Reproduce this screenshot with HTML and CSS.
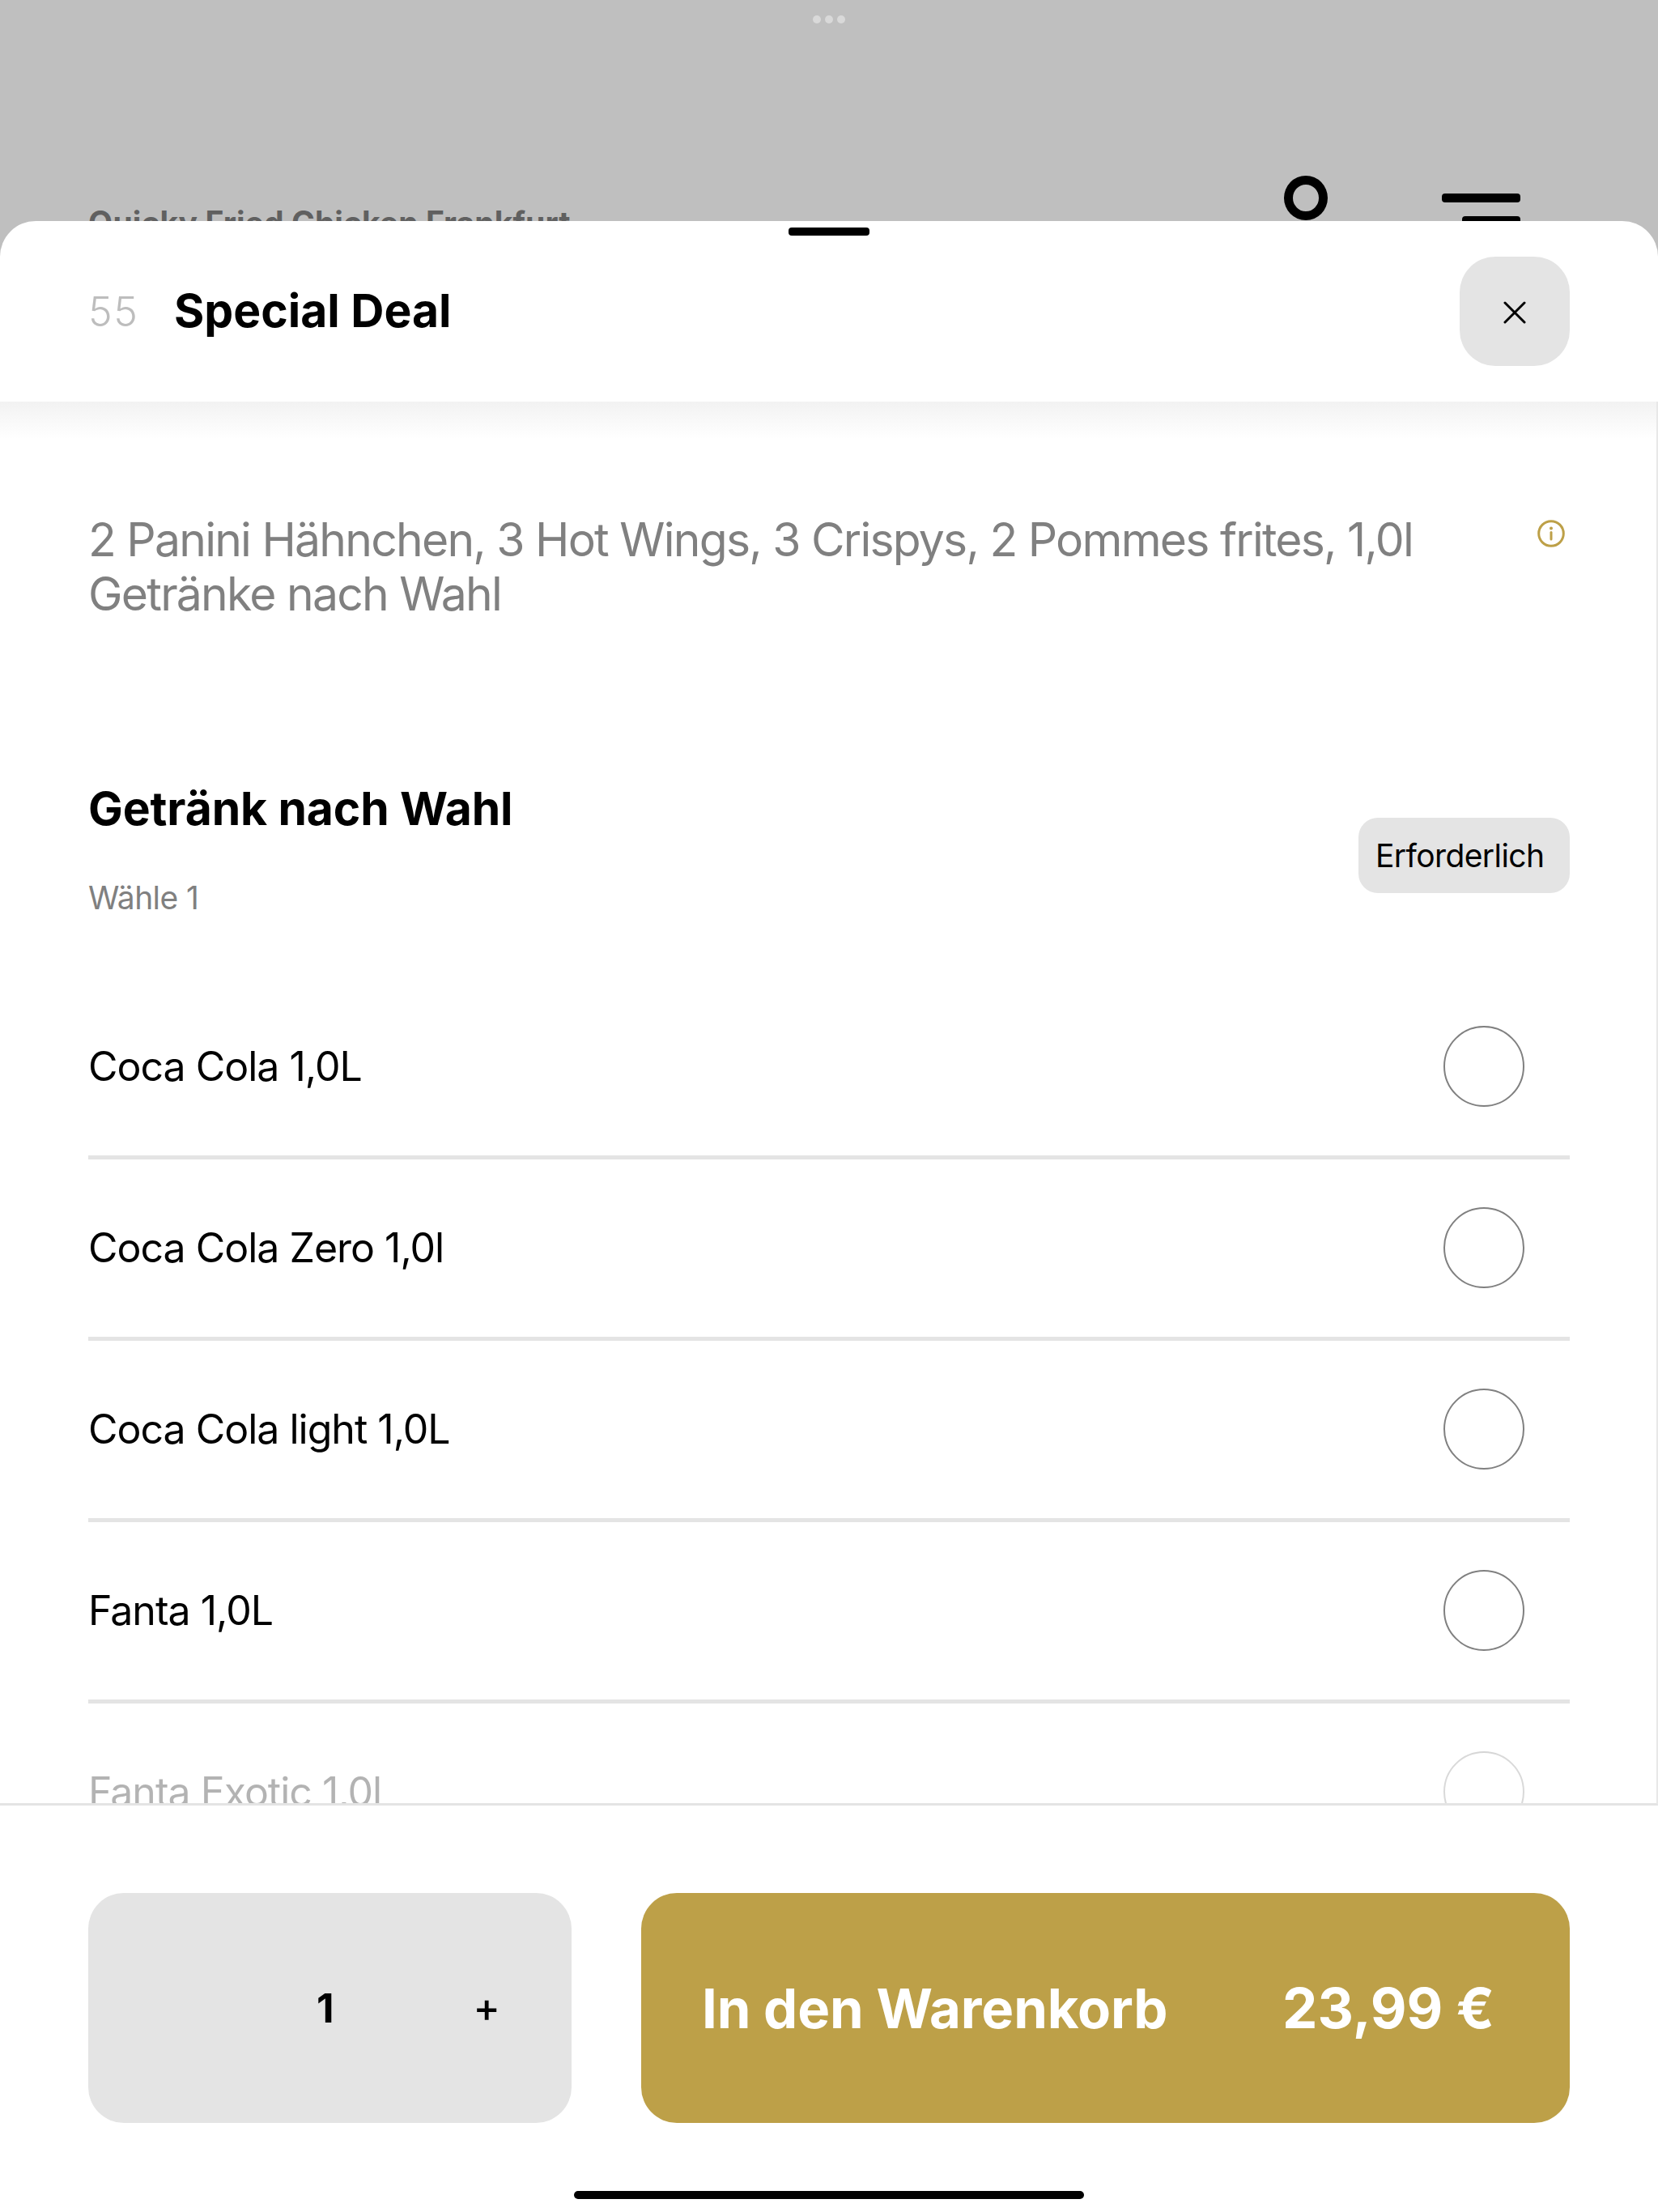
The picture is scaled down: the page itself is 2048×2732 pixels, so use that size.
FILE: index.html
```html
<!DOCTYPE html>
<html lang="de">
<head>
    <meta charset="UTF-8">
    <meta name="viewport" content="width=device-width, initial-scale=1.0">
    <title>Special Deal</title>
    <link rel="stylesheet" href="styles.css">
</head>
<body>

    <div class="backdrop">
        <div class="dots"><span></span><span></span><span></span></div>
        <div class="shop-bar">
            <span class="shop-name">Quicky Fried Chicken Frankfurt</span>
            <span class="search-ring"></span>
            <span class="menu-lines"><i></i><i class="short"></i></span>
        </div>
    </div>

    <div class="sheet">
        <div class="sheet-handle"></div>

        <header class="sheet-header">
            <span class="item-number">55</span>
            <h1 class="item-title">Special Deal</h1>
            <button class="close-btn" type="button" aria-label="Schließen">
                <svg width="28" height="28" viewBox="0 0 28 28"><path d="M2 2 L26 26 M26 2 L2 26" stroke="#000" stroke-width="3" stroke-linecap="round"/></svg>
            </button>
        </header>

        <main class="sheet-body">
            <div class="description">
                <p>2 Panini Hähnchen, 3 Hot Wings, 3 Crispys, 2 Pommes frites, 1,0l Getränke nach Wahl</p>
                <svg class="info-icon" width="34" height="34" viewBox="0 0 34 34">
                    <circle cx="17" cy="17" r="15.3" fill="none" stroke="#bda048" stroke-width="3"/>
                    <circle cx="17" cy="10.5" r="2" fill="#bda048"/>
                    <path d="M17 15.5 V24" stroke="#bda048" stroke-width="3" stroke-linecap="round"/>
                </svg>
            </div>

            <section class="group-head">
                <div>
                    <h2 class="group-title">Getränk nach Wahl</h2>
                    <p class="group-hint">Wähle 1</p>
                </div>
                <span class="chip">Erforderlich</span>
            </section>

            <ul class="options">
                <li class="option"><span>Coca Cola 1,0L</span><span class="radio"></span></li>
                <li class="option"><span>Coca Cola Zero 1,0l</span><span class="radio"></span></li>
                <li class="option"><span>Coca Cola light 1,0L</span><span class="radio"></span></li>
                <li class="option"><span>Fanta 1,0L</span><span class="radio"></span></li>
                <li class="option"><span>Fanta Exotic 1,0l</span><span class="radio"></span></li>
            </ul>
            <div class="body-fade"></div>
        </main>

        <footer class="sheet-footer">
            <div class="actions">
                <div class="stepper">
                    <span class="qty">1</span>
                    <span class="plus">+</span>
                </div>
                <button class="add-btn" type="button">
                    <span class="add-label">In den Warenkorb</span>
                    <span>23,99 €</span>
                </button>
            </div>
            <div class="home-bar"></div>
        </footer>
    </div>

</body>
</html>
```

FILE: styles.css
```css
* {
    box-sizing: border-box;
}
html, body {
    margin: 0;
    height: 2732px;
    overflow: hidden;
}
body {
    font-family: Inter, "Liberation Sans", sans-serif;
    background-color: #bfbfbf;
    color: #000;
    display: flex;
    flex-direction: column;
}
h1, h2, p, ul {
    margin: 0;
    padding: 0;
}

/* page behind the sheet */
.backdrop {
    height: 273px;
    flex: none;
    overflow: hidden;
    padding: 0 109px;
    display: flex;
    flex-direction: column;
    align-items: stretch;
}
.dots {
    display: flex;
    justify-content: center;
    gap: 5px;
    padding-top: 19px;
    height: 217px;
    flex: none;
}
.dots span {
    width: 10px;
    height: 10px;
    border-radius: 50%;
    background-color: #d9d9d9;
}
.shop-bar {
    display: flex;
    align-items: flex-start;
}
.shop-name {
    flex: 1;
    font-size: 39px;
    font-weight: 700;
    letter-spacing: 0.1px;
    color: #606060;
    line-height: 47px;
    padding-top: 34px;
}
.search-ring {
    width: 54px;
    height: 55px;
    border: 11px solid #000;
    border-radius: 50%;
    margin-right: 141px;
    flex: none;
}
.menu-lines {
    width: 97px;
    margin-right: 61px;
    padding-top: 22px;
    display: flex;
    flex-direction: column;
    align-items: flex-end;
    gap: 17px;
    flex: none;
}
.menu-lines i {
    display: block;
    width: 97px;
    height: 11px;
    border-radius: 4px;
    background-color: #000;
}
.menu-lines .short {
    width: 72px;
}

/* sheet */
.sheet {
    position: relative;
    flex: 1;
    min-height: 0;
    background-color: #fff;
    border-radius: 44px 44px 0 0;
    display: flex;
    flex-direction: column;
}
.sheet-handle {
    position: absolute;
    top: 8px;
    left: 974px;
    width: 100px;
    height: 10px;
    border-radius: 4px;
    background-color: #000;
}
.sheet-header {
    height: 223px;
    flex: none;
    padding: 0 109px;
    display: flex;
    align-items: center;
}
.item-number {
    font-size: 50px;
    font-weight: 300;
    letter-spacing: 1.5px;
    color: #bdbdbd;
    width: 106px;
    flex: none;
}
.item-title {
    flex: 1;
    font-size: 57px;
    font-weight: 700;
    margin-top: -2px;
}
.close-btn {
    width: 136px;
    height: 135px;
    border: none;
    border-radius: 44px;
    background-color: #e4e4e4;
    display: flex;
    align-items: center;
    justify-content: center;
    padding: 3px 0 0;
}

.sheet-body {
    position: relative;
    flex: 1;
    min-height: 0;
    overflow: hidden;
    padding: 0 107px 0 109px;
    border-right: 2px solid #e8e8e8;
    border-bottom: 3px solid #e4e4e4;
}
.sheet-body::before {
    content: "";
    position: absolute;
    top: 0;
    left: 0;
    right: 0;
    height: 46px;
    background: linear-gradient(#f2f2f2, #fff);
}
.description {
    position: relative;
    padding-top: 137px;
    display: flex;
    justify-content: space-between;
    align-items: flex-start;
}
.description p {
    width: 1660px;
    font-size: 57px;
    line-height: 67px;
    letter-spacing: -1.75px;
    color: #808080;
}
.info-icon {
    margin: 9px 6px 0 0;
    flex: none;
}
.group-head {
    margin-top: 198px;
    display: flex;
    justify-content: space-between;
    align-items: flex-end;
}
.group-title {
    font-size: 57px;
    font-weight: 700;
    line-height: 68px;
    letter-spacing: -0.1px;
}
.group-hint {
    margin-top: 53px;
    font-size: 39px;
    line-height: 46px;
    letter-spacing: -0.6px;
    color: #808080;
}
.chip {
    width: 261px;
    height: 93px;
    margin-bottom: 29px;
    padding-left: 21px;
    border-radius: 24px;
    background-color: #e4e4e4;
    font-size: 39px;
    letter-spacing: -0.6px;
    line-height: 93px;
}
.options {
    list-style: none;
    margin-top: 76px;
}
.option {
    height: 224px;
    display: flex;
    align-items: center;
    justify-content: space-between;
    padding: 0 56px 1px 0;
    font-size: 50px;
    letter-spacing: -1px;
    border-bottom: 5px solid #e4e4e4;
}
.radio {
    width: 100px;
    height: 100px;
    border: 2px solid #808080;
    border-radius: 50%;
    flex: none;
}
.body-fade {
    position: absolute;
    left: 0;
    right: 0;
    bottom: 0;
    height: 110px;
    background: linear-gradient(rgba(255, 255, 255, 0), rgba(255, 255, 255, 0.7) 45%, rgba(255, 255, 255, 0.7));
}

/* footer */
.sheet-footer {
    height: 502px;
    flex: none;
    padding: 0 109px;
    display: flex;
    flex-direction: column;
    align-items: stretch;
}
.actions {
    margin-top: 108px;
    height: 284px;
    flex: none;
    display: flex;
    gap: 86px;
}
.stepper {
    width: 597px;
    flex: none;
    border-radius: 44px;
    background-color: #e4e4e4;
    display: flex;
    align-items: center;
    font-weight: 700;
}
.qty {
    margin-left: 282px;
    font-size: 50px;
}
.plus {
    margin-left: 172px;
    margin-top: -2px;
    font-size: 50px;
    font-weight: 500;
}
.add-btn {
    flex: 1;
    border: none;
    border-radius: 44px;
    background-color: #bda048;
    color: #fff;
    font-family: inherit;
    font-size: 69px;
    font-weight: 700;
    padding: 0 93px 0 75px;
    display: flex;
    align-items: center;
    justify-content: space-between;
}
.add-label {
    font-size: 67px;
    letter-spacing: -0.1px;
}
.home-bar {
    width: 630px;
    height: 10px;
    margin: 84px auto 0;
    border-radius: 5px;
    background-color: #000;
}
```
